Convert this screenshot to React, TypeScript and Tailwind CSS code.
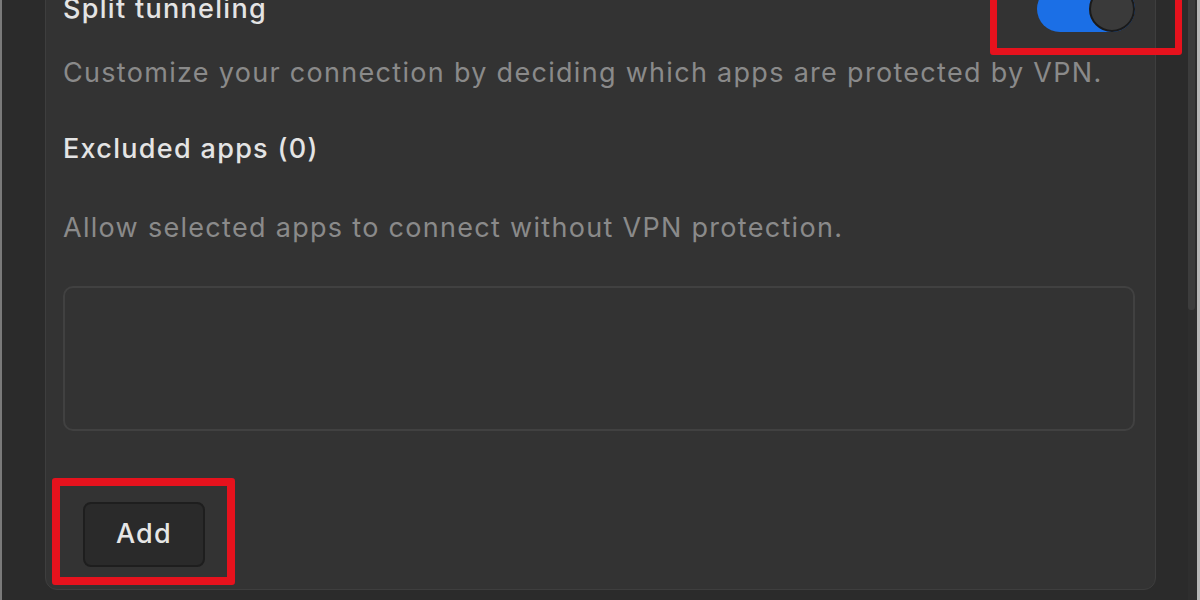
import React from "react";

export default function App() {
  return (
    <div
      className="relative w-[1200px] h-[600px] overflow-hidden bg-[#2b2b2b] flex"
      style={{ fontFamily: "Inter, 'Noto Sans', sans-serif" }}
    >
      <div className="w-[2px] h-full bg-[#7a7a7a]" />
      <div className="flex-1 flex pl-[43px]">
        <div className="w-[1111px] h-[604px] mt-[-14px] bg-[#333333] border border-[#3e3e3e] rounded-b-[12px] pl-[17px] pr-[20px] pb-[22px] flex flex-col">
          <div className="flex items-center justify-between h-[44px]">
            <span className="text-[27px] leading-[32px] tracking-[1.3px] font-medium text-[#e4e4e4]">Split tunneling</span>
            <div className="w-[98px] h-[46px] rounded-full bg-[#1b6fe6] relative">
              <div className="absolute right-0 top-0 w-[46px] h-[46px] rounded-full bg-[#3a3a3a] border-2 border-[#1a1a1a]" />
            </div>
          </div>
          <p className="mt-[26px] text-[27px] leading-[32px] tracking-[1.3px] text-[#8a8a8a] whitespace-nowrap">
            Customize your connection by deciding which apps are protected by VPN.
          </p>
          <p className="mt-[44px] text-[27px] leading-[32px] tracking-[1.3px] font-medium text-[#e4e4e4]">Excluded apps (0)</p>
          <p className="mt-[47px] text-[27px] leading-[32px] tracking-[1.3px] text-[#8a8a8a]">
            Allow selected apps to connect without VPN protection.
          </p>
          <div className="mt-[42px] h-[145px] rounded-[10px] border-2 border-[#414141] bg-[#333333]" />
          <div className="mt-auto ml-[20px]">
            <button className="w-[122px] h-[65px] rounded-[8px] bg-[#2a2a2a] border-2 border-[#1e1e1e] text-[27px] tracking-[1.3px] font-medium text-[#e6e6e6] flex items-center justify-center">
              Add
            </button>
          </div>
        </div>
        <div className="flex-1" />
        <div className="w-[9px] h-full bg-[#2e2e2e] flex flex-col">
          <div className="w-[7px] h-[310px] bg-[#3c3c3c] rounded-b-[3px]" />
        </div>
        <div className="w-[3px] h-full bg-[#b8b8b8]" />
      </div>
      <div className="absolute left-[990px] top-[-10px] w-[192px] h-[65px] border-[7px] border-[#e6121d] rounded-[3px]" />
      <div className="absolute left-[52px] top-[478px] w-[183px] h-[107px] border-[8px] border-[#e6121d] rounded-[3px]" />
    </div>
  );
}
